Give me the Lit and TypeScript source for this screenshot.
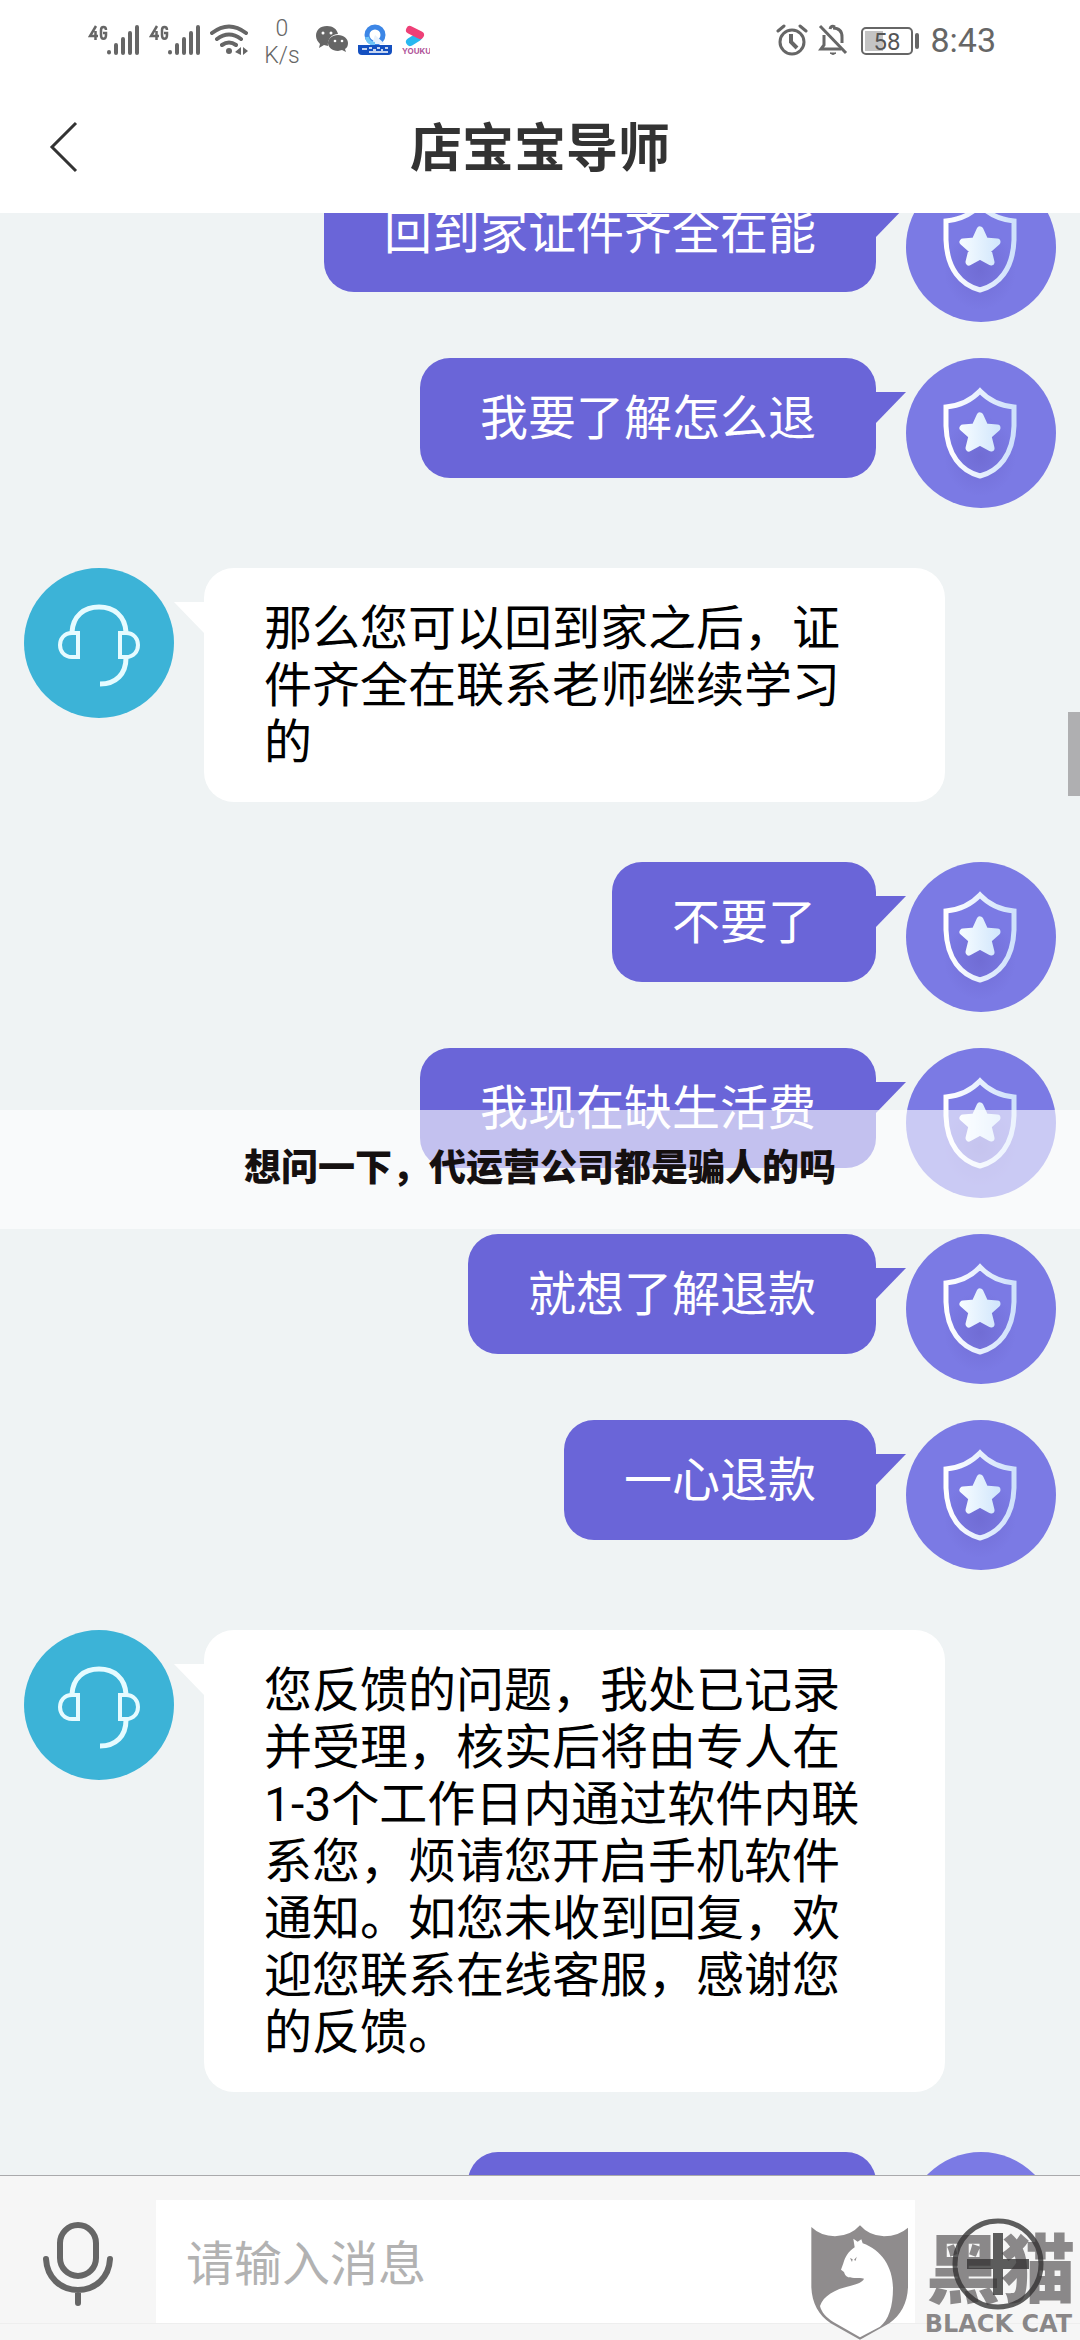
import { LitElement, html, css, svg } from "lit";
import { customElement, property } from "lit/decorators.js";

type Side = "me" | "agent";
interface Message {
  from: Side;
  text: string;
}

const MESSAGES: Message[] = [
  { from: "me", text: "回到家证件齐全在能" },
  { from: "me", text: "我要了解怎么退" },
  { from: "agent", text: "那么您可以回到家之后，证件齐全在联系老师继续学习的" },
  { from: "me", text: "不要了" },
  { from: "me", text: "我现在缺生活费" },
  { from: "me", text: "就想了解退款" },
  { from: "me", text: "一心退款" },
  {
    from: "agent",
    text: "您反馈的问题，我处已记录并受理，核实后将由专人在1-3个工作日内通过软件内联系您，烦请您开启手机软件通知。如您未收到回复，欢迎您联系在线客服，感谢您的反馈。",
  },
  { from: "me", text: "我就是想退款" },
];

/* How far the conversation is scrolled when it opens. */
const INITIAL_SCROLL = 41;

@customElement("status-bar")
export class StatusBar extends LitElement {
  static styles = css`
    :host {
      display: flex;
      justify-content: space-between;
      align-items: center;
      height: 80px;
      padding: 0 84px 0 88px;
      color: #666;
      font-family: Roboto, "Noto Sans CJK SC", sans-serif;
    }
    .group {
      display: flex;
      align-items: center;
      gap: 10px;
    }
    svg {
      display: block;
    }
    .rate {
      width: 40px;
      margin: 0 4px;
      padding-top: 4px;
      text-align: center;
      font-size: 23px;
      line-height: 27px;
      font-weight: 300;
    }
    .clock {
      font-size: 34px;
      line-height: 40px;
    }
    .pct {
      font: 24px Roboto, sans-serif;
    }
    .tiny {
      font: bold 8px Inter, sans-serif;
    }
  `;

  private signal() {
    return html`<svg width="51" height="32" viewBox="0 0 51 32" role="img" aria-label="4G">
      <g fill="none" stroke="#666" stroke-width="2.500">
        <path d="M8 2L2 12h8M7.500 7v9" />
        <path d="M18 6c0-4-5-4-5 0v5c0 5 5 5 5 0V9h-3" />
      </g>
      <g stroke="#666" stroke-width="4" stroke-linecap="round">
        <path d="M21 28v.5M28 21v8M35 15v14M42 9v20M49 3v26" />
      </g>
    </svg>`;
  }

  render() {
    return html`
      <div class="group">
        ${this.signal()} ${this.signal()}
        <svg width="38" height="32" viewBox="0 0 38 32" fill="none" stroke="#666" stroke-linecap="round">
          <path stroke-width="4" d="M2 9Q19-4 36 9M7 15Q19 6 31 15M12 21Q19 16 26 21" />
          <circle cx="19" cy="27" r="3" fill="#666" stroke="none" />
          <path d="M31 23v8l-6-3zM33 23v8l5-4z" fill="#666" stroke="none" />
        </svg>
        <div class="rate">0<br />K/s</div>
        <svg width="32" height="28" viewBox="0 0 32 28">
          <path fill="#666" d="M11 0C4 0 0 4 0 10c0 3 2 6 4 8l-1 4 5-3 4 1c-1-7 4-12 10-12C21 3 17 0 11 0z" />
          <path fill="#666" d="M22 9c-6 0-10 4-10 8s4 8 10 8l4-1 4 2-1-3c2-1 3-3 3-6 0-4-4-8-10-8z" />
          <g fill="#fff">
            <circle cx="7" cy="7" r="1.500" /><circle cx="15" cy="7" r="1.500" />
            <circle cx="19" cy="15" r="1.300" /><circle cx="26" cy="15" r="1.300" />
          </g>
        </svg>
        <svg width="34" height="32" viewBox="0 0 34 32">
          <circle cx="17" cy="11" r="8" fill="none" stroke="#3c86e6" stroke-width="5" />
          <path d="M17 11l10 9H14z" fill="#e8f1fc" />
          <path d="M9 13a8 8 0 0 0 8 7" fill="none" stroke="#6fc4f6" stroke-width="4" />
          <path d="M0 21h34v6q0 4-4 4H4q-4 0-4-4z" fill="#1450c0" />
          <path d="M4 25h5M11 24h3M15 26h3M19 24h3M23 26h2M27 24h3M11 28h19" stroke="#fff" stroke-width="1.500" />
        </svg>
        <svg width="28" height="32" viewBox="0 0 28 32">
          <path d="M8 18L16 13" stroke="#27b8f0" stroke-width="8" stroke-linecap="round" />
          <path d="M8 6L18 11" stroke="#ee4077" stroke-width="8" stroke-linecap="round" />
          <text class="tiny" x="0" y="30" fill="#b0559a">YOUKU</text>
        </svg>
      </div>
      <div class="group">
        <svg width="32" height="32" viewBox="0 0 32 32" fill="none" stroke="#666" stroke-width="3">
          <circle cx="16" cy="18" r="12" />
          <path stroke-width="4" d="M15 10v8l6 6" />
          <path d="M2 7l6-5M24 2l6 5" stroke-linecap="round" />
        </svg>
        <svg width="30" height="32" viewBox="0 0 30 32" fill="none" stroke="#666" stroke-width="3">
          <path d="M2 2l26 27" />
          <path d="M6 11v10l-3 4h20M12 5q1-4 5-2M15 4c6 0 9 3 9 9v6" />
          <path d="M12 29q3 3 6 0z" fill="#666" stroke-width="1" />
        </svg>
        <svg width="62" height="32" viewBox="0 0 62 32">
          <rect x="4" y="4" width="50" height="26" rx="4" fill="none" stroke="#666" stroke-width="2" />
          <rect x="7" y="7" width="18" height="20" fill="#c4c4c4" />
          <rect x="57" y="9" width="4" height="16" rx="2" fill="#666" />
          <text class="pct" x="29" y="26" text-anchor="middle" fill="#555">58</text>
        </svg>
        <div class="clock">8:43</div>
      </div>
    `;
  }
}

@customElement("chat-avatar")
export class ChatAvatar extends LitElement {
  @property() side: Side = "me";

  static styles = css`
    :host {
      display: block;
      flex: none;
      width: 150px;
      height: 150px;
    }
    svg {
      display: block;
    }
  `;

  render() {
    return html`<svg width="150" height="150" viewBox="0 0 150 150">
      ${this.side === "me"
        ? svg`
          <defs>
            <linearGradient id="edge" x1="0" x2="1"><stop offset="0" stop-color="#fff"/><stop offset="1" stop-color="#cfe1fb"/></linearGradient>
            <linearGradient id="star" x1="0" x2="1"><stop offset="0" stop-color="#f4fbff"/><stop offset="1" stop-color="#d3e7fc"/></linearGradient>
            <radialGradient id="glow"><stop offset="0" stop-color="#6d68cf"/><stop offset="1" stop-color="#6d68cf" stop-opacity="0"/></radialGradient>
          </defs>
          <circle cx="75" cy="75" r="75" fill="#7b7ae4"/>
          <ellipse cx="74" cy="98" rx="36" ry="40" fill="url(#glow)" opacity=".75"/>
          <path d="M74 33Q61 47 40 49V68C41 97 55 113 74 118C93 113 107 97 108 68V49Q87 47 74 33Z" fill="none" stroke="url(#edge)" stroke-width="5"/>
          <path d="M74 58L79 69L91 70L82 78L85 90L74 84L63 90L66 78L57 70L69 69Z" fill="url(#star)" stroke="url(#star)" stroke-width="7" stroke-linejoin="round"/>`
        : svg`
          <circle cx="75" cy="75" r="75" fill="#3cb3d7"/>
          <g fill="none" stroke="#e6fbff" stroke-width="4">
            <path d="M48 64C49 48 60 39 75 39S101 48 102 64" stroke-width="5"/>
            <path d="M54 65V89H48C40 89 36 83 36 77S40 65 48 65Z"/>
            <path d="M96 65V89H102C110 89 114 83 114 77S110 65 102 65Z"/>
            <path d="M102 90C102 106 92 116 76 116" stroke-width="5"/>
          </g>`}
    </svg>`;
  }
}

@customElement("chat-message")
export class ChatMessage extends LitElement {
  @property({ reflect: true }) side: Side = "me";
  @property() text = "";

  static styles = css`
    :host {
      display: flex;
      align-items: flex-start;
      gap: 30px;
      padding: 0 24px;
    }
    :host([side="me"]) {
      flex-direction: row-reverse;
    }
    :host([side="agent"]) {
      margin: 24px 0;
      padding-right: 135px;
    }
    .bubble {
      position: relative;
      box-sizing: border-box;
      padding: 32px 60px 31px;
      border-radius: 30px;
      font-size: 48px;
      line-height: 57px;
    }
    .bubble::after {
      content: "";
      position: absolute;
      top: 34px;
      width: 30px;
      height: 31px;
      background: inherit;
    }
    .me {
      background: #6a65d8;
      color: #fff;
    }
    .me::after {
      left: 100%;
      clip-path: polygon(0 0, 100% 0, 0 100%);
    }
    .agent {
      background: #fff;
      color: #000;
    }
    .agent::after {
      right: 100%;
      clip-path: polygon(0 0, 100% 0, 100% 100%);
    }
    .range {
      white-space: nowrap;
    }
  `;

  /* Number ranges such as "1-3" stay on one line. */
  private parts() {
    return this.text
      .split(/(\d+-\d+)/)
      .map((part, i) => (i % 2 ? html`<span class="range">${part}</span>` : part));
  }

  render() {
    return html`<chat-avatar side=${this.side}></chat-avatar>
      <div class="bubble ${this.side}">${this.parts()}</div>`;
  }
}

@customElement("app-root")
export class AppRoot extends LitElement {
  static styles = css`
    :host {
      position: relative;
      display: flex;
      flex-direction: column;
      height: 100vh;
      overflow: hidden;
      background: #eff3f4;
      font-family: Roboto, "Noto Sans CJK SC", sans-serif;
    }
    header {
      flex: none;
      background: #fff;
    }
    .nav {
      display: grid;
      grid-template-columns: 128px 1fr 128px;
      align-items: center;
      height: 133px;
    }
    button {
      display: flex;
      align-items: center;
      justify-content: center;
      padding: 0;
      border: 0;
      background: none;
    }
    svg {
      display: block;
    }
    h1 {
      margin: 0;
      padding-top: 6px;
      text-align: center;
      color: #333;
      font-size: 52px;
      line-height: 64px;
      font-weight: 700;
    }
    .chat {
      flex: 1;
      min-height: 0;
      overflow-y: auto;
      scrollbar-width: none;
    }
    .list {
      display: flex;
      flex-direction: column;
      gap: 36px;
    }
    .thumb {
      position: absolute;
      right: 0;
      top: 712px;
      width: 12px;
      height: 84px;
      background: #afafb1;
    }
    .banner {
      position: absolute;
      left: 0;
      right: 0;
      top: 1110px;
      padding: 29px 0 38px;
      background: rgba(255, 255, 255, 0.6);
      color: #151010;
      text-align: center;
      font-family: "Noto Sans CJK SC", sans-serif;
      font-size: 37px;
      line-height: 52px;
      font-weight: 900;
    }
    footer {
      flex: none;
      padding: 24px 0 16px;
      border-top: 1px solid #a9a9ab;
      background: #f6f6f6;
    }
    .composer {
      display: grid;
      grid-template-columns: 156px 1fr 165px;
      height: 123px;
      border-bottom: 1px solid #eee;
    }
    .composer button {
      padding-top: 5px;
    }
    input {
      min-width: 0;
      box-sizing: border-box;
      padding: 5px 30px 0;
      border: 0;
      border-radius: 0;
      outline: 0;
      background: #fff;
      color: #333;
      font: inherit;
      font-size: 48px;
    }
    input::placeholder {
      color: #b2b2b2;
      opacity: 1;
    }
    .mark {
      position: absolute;
      right: 0;
      bottom: 0;
      pointer-events: none;
    }
    .mark-cn {
      font: 900 224px "Noto Sans CJK SC", sans-serif;
    }
    .mark-en {
      font: bold 72px "DejaVu Sans", sans-serif;
    }
  `;

  firstUpdated() {
    const chat = this.renderRoot.querySelector<HTMLElement>(".chat")!;
    requestAnimationFrame(() => (chat.scrollTop = INITIAL_SCROLL));
  }

  render() {
    return html`
      <header>
        <status-bar></status-bar>
        <div class="nav">
          <button aria-label="返回">
            <svg width="32" height="52" viewBox="0 0 32 52" fill="none" stroke="#333" stroke-width="3">
              <path d="M28 2L4 26L28 50" />
            </svg>
          </button>
          <h1>店宝宝导师</h1>
        </div>
      </header>
      <main class="chat">
        <div class="list">
          ${MESSAGES.map((m) => html`<chat-message side=${m.from} text=${m.text}></chat-message>`)}
        </div>
      </main>
      <footer>
        <div class="composer">
          <button aria-label="语音">
            <svg width="76" height="90" viewBox="0 0 76 90" fill="none" stroke="#666" stroke-width="6" stroke-linecap="round">
              <rect x="20" y="6" width="36" height="51" rx="18" />
              <path d="M6 40C7 58 20 71 38 71S69 58 70 40M38 71V84" />
            </svg>
          </button>
          <input type="text" placeholder="请输入消息" aria-label="请输入消息" />
          <button aria-label="更多">
            <svg width="92" height="92" viewBox="0 0 92 92" fill="none" stroke="#5c5c5c">
              <circle cx="46" cy="46" r="43" stroke-width="5" />
              <path d="M46 15V77M15 46H77" stroke-width="10" />
            </svg>
          </button>
        </div>
      </footer>
      <div class="thumb"></div>
      <div class="banner">想问一下，代运营公司都是骗人的吗</div>
      <svg class="mark" width="300" height="210" viewBox="0 0 900 630" role="img" aria-label="黑猫 BLACK CAT">
        <path fill="#8f8c8d" d="M94 291Q122 318 165 319Q212 318 240 286Q268 318 312 319Q356 318 384 293V472C382 520 362 556 328 580L240 629L152 580C116 556 96 520 94 472Z" />
        <path fill="#fff" d="M220 326L233 335L244 328L248 340C304 360 338 410 339 474C339 530 326 570 300 590L240 622L160 576C138 562 124 546 120 528C130 498 164 478 210 468C232 462 248 456 252 446C236 442 220 446 205 442C196 438 194 432 192 426L183 419L190 400C196 380 204 366 224 352Z" />
        <path fill="#8f8c8d" d="M210 384L218 388L216 396ZM222 390L230 380L227 392Z" />
        <g fill="#363233" fill-opacity=".56">
          <text x="438" y="500" class="mark-cn">黑猫</text>
          <text x="434" y="607" class="mark-en">BLACK CAT</text>
        </g>
      </svg>
    `;
  }
}
